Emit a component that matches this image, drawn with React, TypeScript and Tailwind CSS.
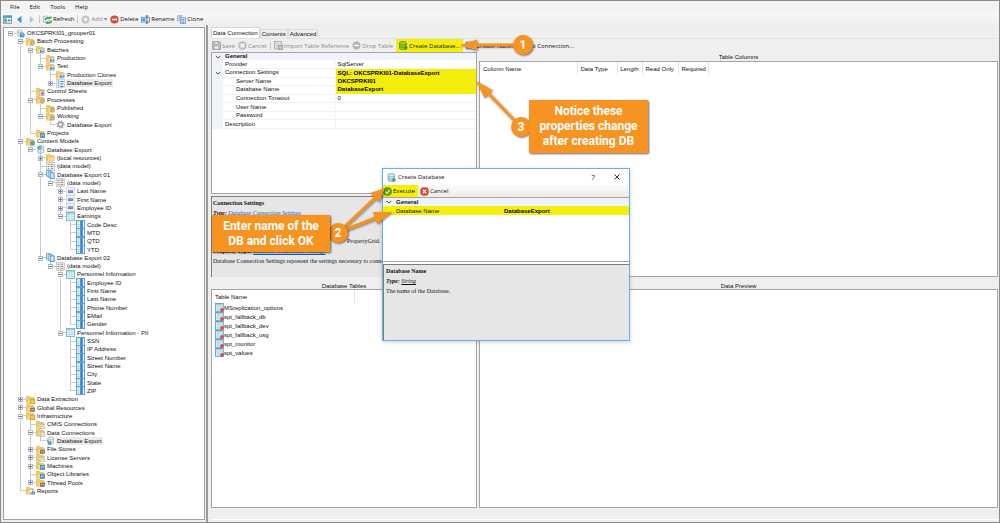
import React from "react";

/* ---------- icons ---------- */

type IconKind =
  | "server" | "folder" | "folderGear" | "folderBatch" | "folderSheet" | "folderBlue" | "folderModel"
  | "folderOrange" | "folderDark" | "folderLink" | "folderDb" | "folderBars"
  | "batch" | "gear" | "model" | "dataModel" | "docType" | "field" | "grid" | "column" | "database";

const folderBadge: Partial<Record<IconKind, React.ReactNode>> = {
  folderGear: <><circle cx="11.5" cy="11" r="3.2" fill="#d9c9a0" stroke="#8f8a80" strokeWidth="1.6" /></>,
  folderBatch: <><rect x="7" y="7" width="9" height="9" fill="#e8f2fb" /><path d="M8 9h3M8 9v5h3M12 9h3M12 14h3M9 11.5h6" stroke="#3f86c8" strokeWidth="1.5" fill="none" /></>,
  folderSheet: <><rect x="7" y="6" width="9" height="10" fill="#fff" stroke="#888" /><path d="M9 9h5M9 11.5h5M9 14h5" stroke="#333" strokeWidth="1.2" /></>,
  folderBlue: <><rect x="8" y="8" width="8" height="7" fill="#4f9fe0" stroke="#2f78b8" /><path d="M9 12l3-2 3 2" stroke="#e2f2ff" fill="none" /></>,
  folderModel: <><circle cx="11.5" cy="11" r="4.5" fill="#49a5dc" /><path d="M8 11l3 3 5-6" stroke="#6dbb45" strokeWidth="2" fill="none" /></>,
  folderOrange: <><rect x="7.500" y="8" width="8" height="7.500" fill="#f7c64a" stroke="#c98a1c" /></>,
  folderDark: <><path d="M8 9h7v6H8z" fill="#8c8a84" stroke="#55534e" /><path d="M9 12h5" stroke="#ddd" /></>,
  folderLink: <><path d="M7 8h9v7H7z" fill="#eef1f5" stroke="#a5a9b0" /><path d="M8 13l3-3 4 3" stroke="#b9963f" fill="none" /></>,
  folderDb: <><path d="M7.500 8.500c0-2 8-2 8 0v5.500c0 2-8 2-8 0z" fill="#dfe3e8" stroke="#969da6" /></>,
  folderBars: <><rect x="7" y="7" width="9" height="9" fill="#f2f8ff" /><path d="M9 15V11M12 15V8M15 15v-5" stroke="#2d7fd0" strokeWidth="2" /></>,
};

function TreeIcon({ kind }: { kind: IconKind }) {
  let body: React.ReactNode;
  if (kind.startsWith("folder")) {
    body = (
      <>
        <path d="M1 14V2.500h5l1.500 2H13V7" fill="#f5cf6b" stroke="#d9a63a" />
        <path d="M1 14.500L3.500 6.500H15.500L13 14.500z" fill="#fbdc86" stroke="#dfae45" />
        {folderBadge[kind]}
      </>
    );
  } else if (kind === "server") {
    body = (
      <>
        <path d="M2 4c0-3 9-3 9 0v7c0 3-9 3-9 0z" fill="#e4e7ea" stroke="#9aa2aa" />
        <path d="M2 5c0 2 9 2 9 0" stroke="#9aa2aa" fill="none" />
        <circle cx="11" cy="10.500" r="4.500" fill="#3c94dc" />
        <path d="M8 10l3-2 1 4 3-3" stroke="#bfe2fa" fill="none" />
      </>
    );
  } else if (kind === "database") {
    body = (
      <>
        <path d="M3 4c0-3 11-3 11 0v8c0 3-11 3-11 0z" fill="#e2e4e6" stroke="#a7abb0" />
        <path d="M3 5c0 2.500 11 2.500 11 0" stroke="#a7abb0" fill="none" />
        <path d="M2 8l6 6M8 9.500V14.500H3" stroke="#3a96dc" strokeWidth="2.500" fill="none" />
      </>
    );
  } else if (kind === "gear") {
    body = (
      <>
        <circle cx="8" cy="8" r="6.300" fill="none" stroke="#a3a3a3" strokeWidth="2.400" strokeDasharray="2.500 2.450" />
        <circle cx="8" cy="8" r="4.300" fill="#e6e6e6" stroke="#989898" strokeWidth="2" />
      </>
    );
  } else if (kind === "batch") {
    body = (
      <>
        <rect x="1" y="0.500" width="14" height="15" fill="#edf4fa" stroke="#a9bccd" />
        <path d="M4 2v11M4 4.500h3M4 8.500h3M4 13h3" stroke="#6a8cab" fill="none" />
        <path d="M8 4.500h5M8 8.500h5M8 13h5" stroke="#3f86c8" strokeWidth="2" />
      </>
    );
  } else if (kind === "model") {
    body = (
      <>
        <path d="M3 13V3l7-2 4 2v9l-6 3z" fill="#cfe6f6" stroke="#4f9fd6" />
        <circle cx="6" cy="5" r="3.500" fill="#48a4dc" />
        <path d="M3 5l3 2 4-4" stroke="#7ec850" strokeWidth="1.800" fill="none" />
        <path d="M8 8h5v5H8z" fill="#fff" stroke="#8ab" />
      </>
    );
  } else if (kind === "dataModel") {
    body = (
      <>
        <rect x="1" y="1" width="14" height="14" fill="#f1f1f1" stroke="#b0b0b0" />
        <path d="M3 4h3M3 8h3M3 12h3M8 4h5M8 8h5M8 12h5" stroke="#8a8a8a" strokeWidth="1.800" />
      </>
    );
  } else if (kind === "docType") {
    body = (
      <>
        <path d="M1 1h7v10H1z" fill="#eaf4fd" stroke="#3d8fd4" strokeWidth="1.300" />
        <path d="M4 3h7v10H4z" fill="#eaf4fd" stroke="#3d8fd4" strokeWidth="1.300" />
        <path d="M7.500 5h7v10h-7z" fill="#d5e9fa" stroke="#2f82ca" strokeWidth="1.500" />
      </>
    );
  } else if (kind === "field") {
    body = (
      <>
        <rect x="1" y="0.500" width="14" height="15" fill="#f0f0f2" stroke="#c6c9ce" />
        <rect x="3.500" y="6" width="9" height="4.500" fill="#5877c4" />
        <path d="M4.500 8.300h7" stroke="#a9bce8" />
      </>
    );
  } else if (kind === "grid") {
    body = (
      <>
        <rect x="0.750" y="1" width="14.500" height="14" fill="#eafaff" stroke="#63a9dc" strokeWidth="1.500" />
        <path d="M1 3h14" stroke="#a4dda0" strokeWidth="2.500" />
        <path d="M5.500 2v13M10.500 2v13M1 7.500h14M1 11.500h14" stroke="#9bcdea" />
      </>
    );
  } else {
    body = (
      <>
        <rect x="0.750" y="0.750" width="14.500" height="14.500" fill="#e7f6ff" stroke="#4a94d6" strokeWidth="1.500" />
        <path d="M2 3h5" stroke="#d9e68a" strokeWidth="3" />
        <rect x="7.500" y="1.500" width="4.500" height="13" fill="#3180cf" />
        <path d="M4 5v9M2 8h5M2 11.500h5" stroke="#9bcdea" />
      </>
    );
  }
  return <svg viewBox="0 0 16 16" className="h-[9px] w-[9px] shrink-0" aria-hidden="true">{body}</svg>;
}

function Glyph({ children }: { children: React.ReactNode }) {
  return <svg viewBox="0 0 16 16" className="h-[9px] w-[9px] shrink-0" aria-hidden="true">{children}</svg>;
}

const glyphs = {
  home: <Glyph><rect x="0.500" y="1.500" width="15" height="13" fill="#fff" stroke="#3a80b8" strokeWidth="1.500" /><path d="M1 3.500h14" stroke="#4295d3" strokeWidth="3" /><rect x="2.500" y="6" width="4" height="7.500" fill="#52a352" /><path d="M14 9.500H9M11.500 7L9 9.500l2.500 2.500" stroke="#2d8a35" strokeWidth="1.500" fill="none" /></Glyph>,
  back: <Glyph><path d="M11.500 1.500L3.500 8l8 6.500z" fill="#3b94d9" /></Glyph>,
  forward: <Glyph><path d="M5 2l7 6-7 6z" fill="#b9bcc0" /></Glyph>,
  refresh: <Glyph><path d="M1 2h7l3 3v8H1z" fill="#dfeaf3" stroke="#8aa0b2" /><path d="M4 9a5 5 0 0 1 8-3M15 10a5 5 0 0 1-8 3" stroke="#3ca53c" strokeWidth="3" fill="none" /><path d="M10 6h5V1.500zM9 11v5l-5-2z" fill="#2f9a35" /></Glyph>,
  add: <Glyph><circle cx="8" cy="8" r="6.500" fill="#c9c9c9" stroke="#b3b3b3" /><path d="M8 4.500v7M4.500 8h7" stroke="#fff" strokeWidth="2.200" /></Glyph>,
  remove: <Glyph><circle cx="8" cy="8" r="7.300" fill="#e04432" /><path d="M3.500 8h9" stroke="#fff" strokeWidth="3" /></Glyph>,
  rename: <Glyph><rect x="0.750" y="4" width="14.500" height="8.500" fill="#e2f1fc" stroke="#4494d4" strokeWidth="1.500" /><rect x="2.500" y="6" width="5" height="4.500" fill="#3b8bd0" /><path d="M10.500 1.500v13M8.500 1.500h4M8.500 14.500h4" stroke="#333" strokeWidth="1.200" /></Glyph>,
  clone: <Glyph><path d="M1 1h8v9H1z" fill="#dceaf6" stroke="#6c8eac" /><path d="M6 5h9v10H6z" fill="#e8f3fc" stroke="#4c86b8" strokeWidth="1.300" /><path d="M8 8h5M8 10.500h5M8 13h5M3 3.500h4M3 6h2" stroke="#4c86b8" strokeWidth="1.300" /></Glyph>,
  save: <Glyph><path d="M1 1h12l2 2v12H1z" fill="#c4c4c4" stroke="#969696" strokeWidth="1.500" /><path d="M4 1.500h7v4H4zM4 9h8v5.500H4z" fill="#f3f3f3" stroke="#969696" /></Glyph>,
  cancelGray: <Glyph><circle cx="8" cy="8" r="6.800" fill="#cdcdcd" stroke="#a2a2a2" strokeWidth="1.300" /><path d="M5 5l6 6M11 5l-6 6" stroke="#fff" strokeWidth="2" /></Glyph>,
  importTable: <Glyph><rect x="1" y="1" width="12" height="13" fill="#ededed" stroke="#a9a9a9" strokeWidth="1.500" /><path d="M1 5h12M1 9h12M5 1v13" stroke="#b6b6b6" /><rect x="8" y="8" width="7.500" height="7.500" fill="#c3c3c3" stroke="#909090" /></Glyph>,
  removeGray: <Glyph><circle cx="8" cy="8" r="7" fill="#b2b2b2" /><path d="M4 8h8" stroke="#fff" strokeWidth="2.600" /></Glyph>,
  createDb: <Glyph><path d="M1 3c0-2.500 12-2.500 12 0v10c0 2.500-12 2.500-12 0z" fill="#a9cf25" stroke="#43841b" strokeWidth="1.400" /><path d="M1 5.500c0 2 12 2 12 0M1 9.500c0 2 12 2 12 0" stroke="#43841b" strokeWidth="1.300" fill="none" /><path d="M12 9v6.500M8.700 12.200h6.600" stroke="#2c9926" strokeWidth="2.600" /></Glyph>,
  database: <Glyph><path d="M2 3c0-2.500 11-2.500 11 0v10c0 2.500-11 2.500-11 0z" fill="#d3eafa" stroke="#4d95c4" strokeWidth="1.300" /><path d="M2 5.500c0 2 11 2 11 0M2 9.500c0 2 11 2 11 0" stroke="#4d95c4" strokeWidth="1.200" fill="none" /><path d="M12 9v7M8.500 12.500h7" stroke="#3fa339" strokeWidth="2.600" /></Glyph>,
  table: <Glyph><rect x="1" y="2" width="14" height="12" fill="#e3f2fd" stroke="#3d86c4" strokeWidth="1.500" /><path d="M1 4h14" stroke="#3d86c4" strokeWidth="3" /><path d="M6 4v10M1 9h14" stroke="#79b1dc" /></Glyph>,
  ok: <Glyph><circle cx="8" cy="8" r="7.200" fill="#66a80f" stroke="#3b7c0b" /><path d="M4 8.300l3 2.800 5-5.600" stroke="#e6f7b0" strokeWidth="2" fill="none" /></Glyph>,
  cancel: <Glyph><rect x="0.500" y="0.500" width="15" height="15" rx="6" fill="#e0453a" /><path d="M5 5l6 6M11 5l-6 6" stroke="#fff" strokeWidth="2.200" /></Glyph>,
  tableRow: <Glyph><rect x="0.750" y="0.750" width="14" height="14" fill="#eefaff" stroke="#4a94d6" strokeWidth="1.500" /><path d="M1.500 3h13" stroke="#b8dba0" strokeWidth="2.500" /><path d="M5.500 2v12M10.500 2v12M1 7h14M1 11h14" stroke="#86c0e6" /><circle cx="12.500" cy="12.500" r="3.500" fill="#ea4b3c" /></Glyph>,
};

function Chevron() {
  return (
    <svg viewBox="0 0 8 8" className="mx-auto block h-[6px] w-[6px]" aria-hidden="true">
      <path d="M1 2.500l3 3 3-3" fill="none" stroke="#333" strokeWidth="1.200" />
    </svg>
  );
}

/* ---------- tree ---------- */

type Item = { label: string; icon: IconKind; open?: boolean; selected?: boolean; children?: Item[] };

const leaf = (label: string, icon: IconKind): Item => ({ label, icon });
const closed = (label: string, icon: IconKind): Item => ({ label, icon, open: false });
const branch = (label: string, icon: IconKind, children: Item[]): Item => ({ label, icon, open: true, children });
const columns = (...labels: string[]) => labels.map((label) => leaf(label, "column"));

const tree: Item = branch("OKCSPRKI01_grooper01", "server", [
  branch("Batch Processing", "folderGear", [
    branch("Batches", "folderBatch", [
      leaf("Production", "folderBatch"),
      branch("Test", "folderBatch", [
        leaf("Production Clones", "folderBatch"),
        { label: "Database Export", icon: "batch", open: false, selected: true },
      ]),
    ]),
    leaf("Control Sheets", "folderSheet"),
    branch("Processes", "folderGear", [
      leaf("Published", "folderGear"),
      branch("Working", "folderGear", [leaf("Database Export", "gear")]),
    ]),
    leaf("Projects", "folderBlue"),
  ]),
  branch("Content Models", "folderModel", [
    branch("Database Export", "model", [
      closed("(local resources)", "folder"),
      leaf("(data model)", "dataModel"),
      branch("Database Export 01", "docType", [
        branch("(data model)", "dataModel", [
          closed("Last Name", "field"),
          closed("First Name", "field"),
          closed("Employee ID", "field"),
          branch("Earnings", "grid", columns("Code Desc", "MTD", "QTD", "YTD")),
        ]),
      ]),
      branch("Database Export 02", "docType", [
        branch("(data model)", "dataModel", [
          branch("Personnel Information", "grid", columns("Employee ID", "First Name", "Last Name", "Phone Number", "EMail", "Gender")),
          branch("Personnel Information - PII", "grid", columns("SSN", "IP Address", "Street Number", "Street Name", "City", "State", "ZIP")),
        ]),
      ]),
    ]),
  ]),
  closed("Data Extraction", "folderOrange"),
  closed("Global Resources", "folderDark"),
  branch("Infrastructure", "folderOrange", [
    leaf("CMIS Connections", "folderLink"),
    branch("Data Connections", "folderDb", [{ label: "Database Export", icon: "database", selected: true }]),
    closed("File Stores", "folderDark"),
    closed("License Servers", "folderLink"),
    closed("Machines", "folderBlue"),
    leaf("Object Libraries", "folderBlue"),
    closed("Thread Pools", "folderDark"),
  ]),
  leaf("Reports", "folderBars"),
]);

type Row = { item: Item; guides: boolean[]; last: boolean };

function flatten(item: Item, guides: boolean[], last: boolean): Row[] {
  const rows: Row[] = [{ item, guides, last }];
  const kids = item.children ?? [];
  kids.forEach((kid, i) => rows.push(...flatten(kid, [...guides, !last], i === kids.length - 1)));
  return rows;
}

const rows = flatten(tree, [], true);

function TreeRow({ item, guides, last }: Row) {
  return (
    <li role="treeitem" aria-level={guides.length + 1} aria-selected={!!item.selected} className="flex min-h-0 items-center">
      {guides.map((on, i) => (
        <span key={i} className="flex w-[10px] shrink-0 self-stretch pl-[4px]">
          <span className={on ? "border-l border-[#cccccc]" : ""} />
        </span>
      ))}
      <span className="relative flex w-[10px] shrink-0 flex-col self-stretch pl-[4px]">
        <span className={guides.length ? "flex-1 border-b border-l border-[#cccccc]" : "flex-1 border-b border-[#cccccc]"} />
        <span className={last ? "flex-1" : "flex-1 border-l border-[#cccccc]"} />
        {item.open !== undefined && (
          <button aria-label={(item.open ? "Collapse " : "Expand ") + item.label} className="absolute left-[2px] top-[2px] flex h-[5px] w-[5px] items-center justify-center border border-[#b3b8c0] bg-white">
            <svg viewBox="0 0 3 3" className="h-[3px] w-[3px] shrink-0" aria-hidden="true">
              <path d={item.open ? "M0 1.500h3" : "M0 1.500h3M1.500 0v3"} stroke="#5a6f9a" strokeWidth="0.900" />
            </svg>
          </button>
        )}
      </span>
      <TreeIcon kind={item.icon} />
      <span className={item.selected ? "ml-px bg-[#ececec] px-px leading-[8px]" : "ml-px px-px leading-[8px]"}>{item.label}</span>
    </li>
  );
}

/* ---------- toolbar ---------- */

function ToolButton({ icon, children, disabled, className = "" }: { icon?: React.ReactNode; children?: React.ReactNode; disabled?: boolean; className?: string }) {
  return (
    <button disabled={disabled} className={"flex h-[13px] items-center gap-px whitespace-nowrap disabled:text-[#8a8a8a] " + className}>
      {icon}
      {children && <span>{children}</span>}
    </button>
  );
}

const Divider = () => <span className="h-[8px] w-px bg-[#c8c8c8]" />;

/* ---------- property grid ---------- */

type Prop = { name: string; value?: string; sub?: boolean; group?: boolean; highlight?: boolean };

const connection: Prop[] = [
  { name: "Provider", value: "SqlServer" },
  { name: "Connection Settings", value: "SQL: OKCSPRKI01-DatabaseExport", group: true, highlight: true },
  { name: "Server Name", value: "OKCSPRKI01", sub: true, highlight: true },
  { name: "Database Name", value: "DatabaseExport", sub: true, highlight: true },
  { name: "Connection Timeout", value: "0", sub: true },
  { name: "User Name", sub: true },
  { name: "Password", sub: true },
  { name: "Description" },
];

function ConnectionGrid() {
  return (
    <table className="h-[76px] w-full table-fixed border-collapse text-left leading-[7px]">
      <colgroup>
        <col className="w-[11px]" />
        <col className="w-[112px]" />
        <col />
      </colgroup>
      <tbody>
        <tr className="bg-[#f0f3fa]">
          <td className="p-0"><Chevron /></td>
          <th colSpan={2} className="p-0 pl-[2px] font-bold">General</th>
        </tr>
        {connection.map((p) => (
          <tr key={p.name}>
            <td className="bg-[#f0f3fa] p-0">{p.group && <Chevron />}</td>
            <th className={"border-b border-r border-[#f0f2f6] p-0 font-normal " + (p.sub ? "pl-[13px]" : "pl-[2px]")}>{p.name}</th>
            <td className={p.highlight ? "bg-[#f3ee0c] p-0 pl-[2px] font-bold text-black" : "border-b border-[#f0f2f6] p-0 pl-[2px]"}>{p.value}</td>
          </tr>
        ))}
      </tbody>
    </table>
  );
}

/* ---------- dialog ---------- */

function CreateDatabaseDialog() {
  return (
    <div role="dialog" aria-label="Create Database" className="absolute left-[381px] top-[167px] flex h-[173px] w-[248px] flex-col border border-[#68b0e4] bg-white shadow-[0_1px_4px_rgba(0,0,0,0.2)]">
      <header className="flex h-[16px] items-center gap-[2px] pl-[4px] font-['Open_Sans',sans-serif]">
        {glyphs.database}
        <h2>Create Database</h2>
        <button aria-label="Help" className="ml-auto mr-[17px] text-[8px]">?</button>
        <button aria-label="Close" className="mr-[9px]">
          <svg viewBox="0 0 6 6" className="h-[6px] w-[6px]" aria-hidden="true"><path d="M.5.5l5 5M5.500.5l-5 5" stroke="#222" strokeWidth="0.900" /></svg>
        </button>
      </header>
      <div className="flex h-[12px] items-center gap-[2px] bg-linear-to-b from-[#fafafa] to-[#ececec] font-['Open_Sans',sans-serif]">
        <ToolButton icon={glyphs.ok} className="bg-[#f3ee0c] pr-[3px]">Execute</ToolButton>
        <ToolButton icon={glyphs.cancel}>Cancel</ToolButton>
      </div>
      <div className="h-[65px] border-b border-t border-[#a5a5a5] leading-[8px]">
        <div className="flex h-[8px] items-center bg-[#f0f3fa] font-bold">
          <span className="w-[11px]"><Chevron /></span>
          <span className="pl-[2px]">General</span>
        </div>
        <div className="flex h-[9px] items-center bg-[#f3ee0c]">
          <label htmlFor="database-name" className="w-[121px] pl-[13px]">Database Name</label>
          <input id="database-name" defaultValue="DatabaseExport" className="h-[8px] min-w-0 flex-1 bg-transparent p-0 font-bold text-black outline-none" />
        </div>
      </div>
      <div className="mt-[2px] flex-1 border-l border-t border-[#7d7d7d] bg-[#e6e6e6] px-[2px] py-px font-['Liberation_Serif',serif] leading-[10px]">
        <p className="font-bold">Database Name</p>
        <p className="italic"><b>Type:</b> <a href="#string" className="underline">String</a></p>
        <p>The name of the Database.</p>
      </div>
    </div>
  );
}

/* ---------- callouts ---------- */

const badge = "absolute flex h-[20px] w-[20px] items-center justify-center rounded-full bg-[#f79320] text-[12px] font-bold text-white shadow-[1px_1px_2px_rgba(0,0,0,0.5)]";
const note = "absolute flex items-center justify-center bg-[#f79320] text-center text-[12px] font-bold leading-[15px] text-white shadow-[1px_1px_2px_rgba(0,0,0,0.6)]";

function Callouts() {
  return (
    <div className="pointer-events-none absolute -inset-px font-['Roboto',sans-serif]">
      <svg viewBox="0 0 1000 523" className="absolute left-0 top-0 h-[523px] w-[1000px] drop-shadow-[1px_1px_1px_rgba(0,0,0,0.45)]" aria-hidden="true">
        <g stroke="#f79320" strokeWidth="3" fill="none">
          <path d="M514 45H474M515 121L485 90M342 229L376 197M342 231L378 217" />
        </g>
        <g fill="#f79320">
          <path d="M460 45L477 39.500V50.500z" />
          <path d="M476 81L492.500 90L484.500 98z" />
          <path d="M385 188L379 202L370 193z" />
          <path d="M392 212L377 224L373 212z" />
        </g>
      </svg>
      <span className={badge + " left-[513px] top-[35px]"}>1</span>
      <span className={badge + " left-[511px] top-[117px]"}>3</span>
      <span className={badge + " left-[328px] top-[223px]"}>2</span>
      <p className={note + " left-[529px] top-[100px] h-[53px] w-[119px]"}>Notice these<br />properties change<br />after creating DB</p>
      <p className={note + " left-[212px] top-[215px] h-[37px] w-[118px]"}>Enter name of the<br />DB and click OK</p>
    </div>
  );
}

/* ---------- page ---------- */

const tables = ["MSreplication_options", "spt_fallback_db", "spt_fallback_dev", "spt_fallback_usg", "spt_monitor", "spt_values"];
const headCell = "border-r border-[#e2e2e2] p-0 px-[3px] font-normal";

export default function App() {
  return (
    <div className="relative flex min-h-screen flex-col overflow-hidden border border-[#8c8c8c] bg-[#efefef] font-['Liberation_Sans',sans-serif] text-[6px] leading-[8px] text-[#111111]">
      <nav className="flex h-[12px] items-center gap-[10px] bg-[#f3f3f3] pl-[9px] font-['Open_Sans',sans-serif]">
        <button>File</button>
        <button>Edit</button>
        <button>Tools</button>
        <button>Help</button>
      </nav>
      <div className="flex h-[12px] items-center gap-[3px] bg-linear-to-b from-[#f9f9f9] to-[#eeeeee] pl-[2px] font-['Open_Sans',sans-serif]">
        <ToolButton icon={glyphs.home} />
        <ToolButton icon={glyphs.back} />
        <ToolButton icon={glyphs.forward} />
        <Divider />
        <ToolButton icon={glyphs.refresh}>Refresh</ToolButton>
        <Divider />
        <ToolButton icon={glyphs.add} disabled>Add ▾</ToolButton>
        <ToolButton icon={glyphs.remove}>Delete</ToolButton>
        <ToolButton icon={glyphs.rename}>Rename</ToolButton>
        <ToolButton icon={glyphs.clone}>Clone</ToolButton>
      </div>

      <div className="flex flex-1">
        <aside className="mb-[2px] ml-[2px] mt-[2px] w-[202px] shrink-0 border border-[#a0a0a0] bg-white pl-[2px] pt-px">
          <ul role="tree" className="grid h-[466px] auto-rows-fr">
            {rows.map((row, i) => <TreeRow key={i} {...row} />)}
          </ul>
        </aside>
        <div className="ml-px w-[2px] bg-[#9c9c9c]" />

        <main className="flex min-w-0 flex-1 flex-col pl-[3px] pt-[2px]">
          <div role="tablist" className="flex h-[11px] items-end">
            <button role="tab" aria-selected="true" className="h-[11px] border border-b-0 border-[#d4d4d4] bg-white px-px">Data Connection</button>
            <button role="tab" aria-selected="false" className="h-[9px] border border-b-0 border-[#dcdcdc] px-px">Contents</button>
            <button role="tab" aria-selected="false" className="h-[9px] border border-b-0 border-[#dcdcdc] px-px">Advanced</button>
          </div>
          <div className="flex h-[14px] items-center gap-[3px] border-t border-[#e2e2e2] pl-px font-['Open_Sans',sans-serif]">
            <ToolButton icon={glyphs.save} disabled>Save</ToolButton>
            <ToolButton icon={glyphs.cancelGray} disabled>Cancel</ToolButton>
            <Divider />
            <ToolButton icon={glyphs.importTable} disabled>Import Table Reference</ToolButton>
            <ToolButton icon={glyphs.removeGray} disabled>Drop Table</ToolButton>
            <ToolButton icon={glyphs.createDb} className="bg-[#f3ee0c] px-[3px]">Create Database...</ToolButton>
            <ToolButton icon={glyphs.table}>Create Table...</ToolButton>
            <ToolButton className="pl-[5px]">Test Connection...</ToolButton>
          </div>

          <div className="flex h-[225px]">
            <section className="flex w-[266px] shrink-0 flex-col">
              <div className="h-[142px] border border-[#a5a5a5] bg-white">
                <ConnectionGrid />
              </div>
              <div className="mt-[2px] flex-1 overflow-hidden border-l border-t border-[#7d7d7d] bg-[#e6e6e6] px-px py-px font-['Liberation_Serif',serif] leading-[10px]">
                <p className="font-bold">Connection Settings</p>
                <p className="italic"><b>Type:</b> <a href="#settings" className="text-[#1a5fb8] underline">Database Connection Settings</a></p>
                <p className="mt-[18px] pl-[134px]">PropertyGrid.</p>
                <p><b>Property Type:</b> <a href="#settings" className="text-[#1a5fb8] underline">Database Connection Settings</a></p>
                <p className="whitespace-nowrap">Database Connection Settings represent the settings necessary to connect</p>
              </div>
            </section>
            <section className="ml-[2px] mr-px flex min-w-0 flex-1 flex-col">
              <h2 className="h-[9px] text-center leading-[11px]">Table Columns</h2>
              <div className="flex-1 border border-[#a5a5a5] bg-white">
                <table className="h-[13px] w-[229px] table-fixed border-collapse whitespace-nowrap text-left">
                  <colgroup><col className="w-[97px]" /><col className="w-[40px]" /><col className="w-[25px]" /><col className="w-[36px]" /><col /></colgroup>
                  <thead>
                    <tr>
                      <th className={headCell}>Column Name</th>
                      <th className={headCell}>Data Type</th>
                      <th className="border-r border-[#e2e2e2] p-0 pr-[3px] text-right font-normal">Length</th>
                      <th className={headCell}>Read Only</th>
                      <th className={headCell}>Required</th>
                    </tr>
                  </thead>
                </table>
              </div>
            </section>
          </div>

          <div className="flex flex-1">
            <section className="flex w-[266px] shrink-0 flex-col">
              <h2 className="h-[12px] text-center leading-[18px]">Database Tables</h2>
              <div className="flex-1 border border-[#a5a5a5] bg-white">
                <table className="w-[143px] border-collapse text-left">
                  <thead>
                    <tr className="h-[13px]"><th className={headCell}>Table Name</th></tr>
                  </thead>
                  <tbody>
                    {tables.map((name) => (
                      <tr key={name} className="h-[9px]">
                        <td className="p-0 pl-[3px]">
                          <span className="flex h-[9px] items-center">{glyphs.tableRow}{name}</span>
                        </td>
                      </tr>
                    ))}
                  </tbody>
                </table>
              </div>
            </section>
            <section className="ml-[2px] mr-px flex min-w-0 flex-1 flex-col">
              <h2 className="h-[12px] text-center leading-[18px]">Data Preview</h2>
              <div className="flex-1 border border-[#a5a5a5] bg-white" />
            </section>
          </div>
          <footer className="mb-[2px] h-[12px] border-b border-white" />
        </main>
      </div>

      <CreateDatabaseDialog />
      <Callouts />
    </div>
  );
}
